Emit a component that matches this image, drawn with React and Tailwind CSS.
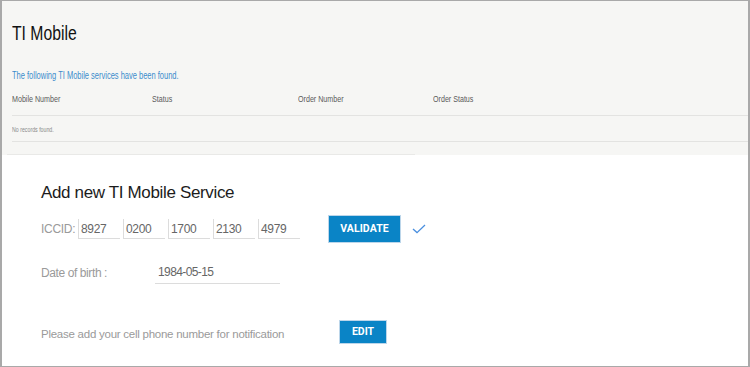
import React from "react";

const iccid = ["8927", "0200", "1700", "2130", "4979"];
const columns = ["Mobile Number", "Status", "Order Number", "Order Status"];

const Squeeze = ({ className = "", children }) => (
  <span className={`inline-block origin-left scale-x-75 whitespace-nowrap ${className}`}>{children}</span>
);

const App = () => {
  return (
    <div className="w-[750px] h-[367px] bg-white border-x-2 border-y border-[#a9a9a9] font-['Liberation_Sans',Arial,sans-serif] overflow-hidden">
      {/* Services found */}
      <div className="bg-[#f6f6f4] h-[154px] pl-[10px] pt-[21px]">
        <h1 className="text-[21px] leading-none text-[#111] h-[21px]">
          <Squeeze>TI Mobile</Squeeze>
        </h1>
        <p className="mt-[28px] text-[10px] leading-none text-[#3b8ccc] h-[10px]">
          <Squeeze>The following TI Mobile services have been found.</Squeeze>
        </p>
        <div className="mt-[13px] h-[22px] grid grid-cols-[140px_146px_135px_1fr] border-b border-[#e3e3e1] text-[9.5px] leading-none text-[#5a5a5a]">
          {columns.map((c) => (
            <div key={c}>
              <Squeeze>{c}</Squeeze>
            </div>
          ))}
        </div>
        <div className="h-[26px] pt-[10px] border-b border-[#e3e3e1] text-[7px] leading-none text-[#8a8a8a]">
          <Squeeze>No records found.</Squeeze>
        </div>
        <div className="mt-[12px] -ml-[5px] w-[408px] h-px bg-[#e9e9e7]" />
      </div>

      {/* Add new service */}
      <div className="pl-[39px] pt-[29px]">
        <h2 className="text-[17px] leading-none tracking-[-0.35px] text-[#1c1c1c]">Add new TI Mobile Service</h2>

        <div className="mt-[14px] flex items-center h-[28px]">
          <span className="text-[12px] tracking-[-0.3px] text-[#9a9a9a] w-[37px]">ICCID:</span>
          <div className="flex gap-[3px]">
            {iccid.map((v) => (
              <div
                key={v}
                className="w-[42px] h-[20px] border-l border-b border-[#dcdcdc] pl-[2px] text-[12px] leading-[20px] tracking-[-0.3px] text-[#666]"
              >
                {v}
              </div>
            ))}
          </div>
          <button className="ml-[28px] w-[73px] h-[28px] bg-[#0a84c6] border border-[#bcd6ea] text-white text-[10.5px] font-bold font-['Roboto',sans-serif] tracking-[0.1px]">
            VALIDATE
          </button>
          <svg className="ml-[11px]" width="14" height="10" viewBox="0 0 14 10" fill="none">
            <polyline points="1,5 5,8.6 13,1" stroke="#4a8fdf" strokeWidth="1.3" />
          </svg>
        </div>

        <div className="mt-[19px] flex items-center h-[22px]">
          <span className="w-[114px] text-[12px] tracking-[-0.4px] text-[#9a9a9a]">Date of birth :</span>
          <div className="w-[125px] h-[22px] border-b border-[#dcdcdc] pl-[3px] text-[12px] leading-[20px] tracking-[-0.6px] text-[#666]">
            1984-05-15
          </div>
        </div>

        <div className="mt-[36px] flex items-center h-[24px]">
          <span className="w-[298px] pt-[6px] text-[11.5px] tracking-[-0.25px] text-[#9a9a9a]">
            Please add your cell phone number for notification
          </span>
          <button className="w-[48px] h-[24px] bg-[#0a84c6] border border-[#bcd6ea] text-white text-[10.5px] font-bold font-['Roboto',sans-serif]">
            EDIT
          </button>
        </div>
      </div>
    </div>
  );
};

export default App;
